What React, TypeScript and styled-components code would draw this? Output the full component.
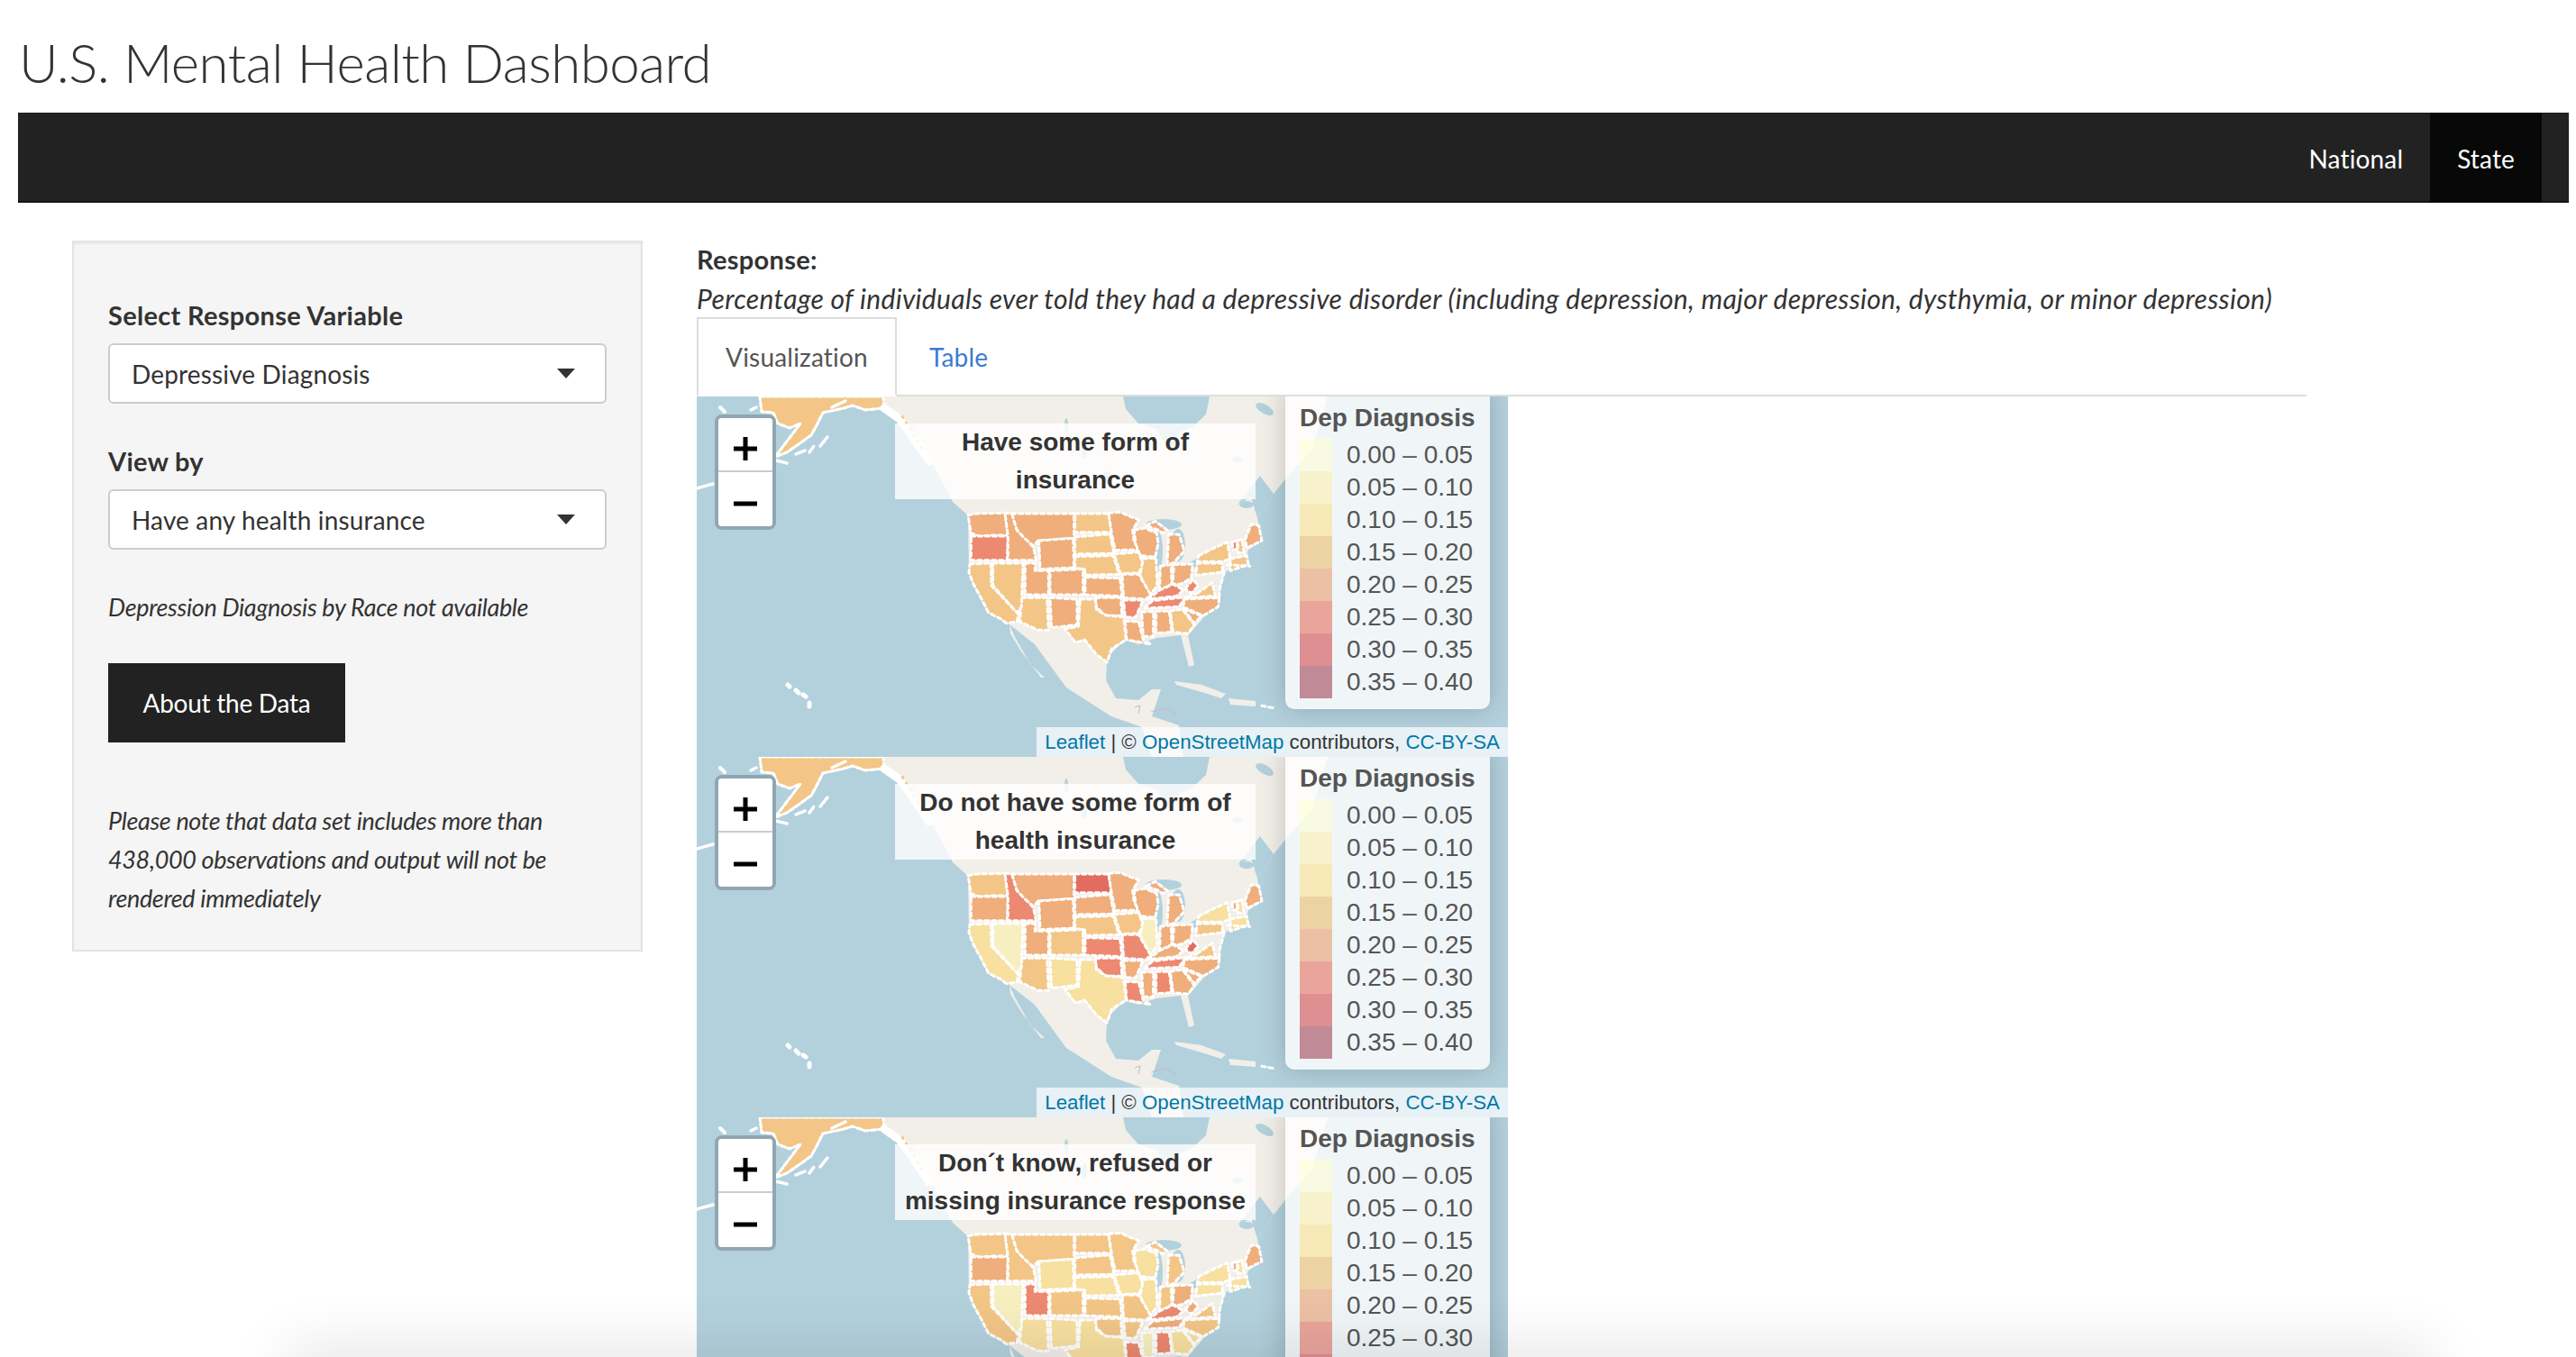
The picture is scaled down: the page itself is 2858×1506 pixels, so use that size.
import React from "react";
import styled, { createGlobalStyle } from "styled-components";

const Global = createGlobalStyle`
  html, body { margin: 0; padding: 0; background: #fff; overflow: hidden; }
  * { box-sizing: border-box; }
`;

const UI = `"Lato", "Open Sans", "Liberation Sans", sans-serif`;
const MAPFONT = `"Liberation Sans", Arial, sans-serif`;

const Page = styled.div`
  position: relative;
  width: 2858px;
  height: 1506px;
  overflow: hidden;
  font-family: ${UI};
  color: #333;
`;
const Title = styled.h1`
  margin: 0;
  height: 125px;
  padding: 34px 0 0 21px;
  font-size: 60px;
  line-height: 70px;
  font-weight: 300;
  letter-spacing: -0.55px;
  color: #333;
`;
const NavBar = styled.nav`
  margin: 0 8px 0 20px;
  height: 100px;
  background: #222;
  border-bottom: 2px solid #121212;
  display: flex;
  justify-content: flex-end;
  padding-right: 30px;
`;
const NavItem = styled.a<{ $active?: boolean }>`
  display: flex;
  align-items: center;
  padding: 2px 30px 0;
  height: 100px;
  font-size: 28px;
  letter-spacing: 0.15px;
  color: #fff;
  background: ${(p) => (p.$active ? "#080808" : "transparent")};
`;
const Main = styled.div`
  display: flex;
  align-items: flex-start;
  padding: 42px 0 0 80px;
`;
const Well = styled.aside`
  width: 633px;
  height: 789px;
  flex: none;
  padding: 60px 38px 0;
  background: #f5f5f5;
  border: 2px solid #e3e3e3;
  box-shadow: inset 0 2px 2px rgba(0, 0, 0, 0.05);
`;
const Label = styled.div<{ $gap?: number }>`
  margin-top: ${(p) => p.$gap ?? 0}px;
  font-size: 29px;
  line-height: 42px;
  font-weight: 700;
  letter-spacing: 0.3px;
`;
const Select = styled.div`
  position: relative;
  margin-top: 10px;
  height: 67px;
  padding-left: 24px;
  display: flex;
  align-items: center;
  background: #fff;
  border: 2px solid #ccc;
  border-radius: 6px;
  font-size: 28px;
  letter-spacing: 0.15px;
  &::after {
    content: "";
    position: absolute;
    right: 33px;
    top: 26px;
    border-style: solid;
    border-width: 11px 10.5px 0;
    border-color: #333 transparent transparent;
  }
`;
const Note = styled.p<{ $gap: number }>`
  margin: ${(p) => p.$gap}px 0 0;
  font-size: 27px;
  line-height: 43px;
  font-style: italic;
  letter-spacing: -0.35px;
  white-space: nowrap;
`;
const Button = styled.div`
  margin-top: 41px;
  width: 263px;
  height: 88px;
  background: #222;
  color: #fff;
  display: flex;
  align-items: center;
  justify-content: center;
  font-size: 28px;
  letter-spacing: -0.25px;
`;
const Content = styled.section`
  margin-left: 60px;
  width: 1786px;
`;
const ResponseLabel = styled.div`
  font-size: 29px;
  line-height: 42px;
  font-weight: 700;
  letter-spacing: 0.3px;
`;
const ResponseText = styled.div`
  margin-top: 1px;
  font-size: 30px;
  line-height: 42px;
  font-style: italic;
  letter-spacing: 0.33px;
  white-space: nowrap;
`;
const Tabs = styled.div`
  height: 88px;
  display: flex;
  border-bottom: 2px solid #ddd;
`;
const Tab = styled.div<{ $active?: boolean }>`
  height: 88px;
  padding: 0 30px 0 ${(p) => (p.$active ? 30 : 36)}px;
  display: flex;
  align-items: center;
  font-size: 28px;
  letter-spacing: 0.2px;
  color: ${(p) => (p.$active ? "#555" : "#3a7bd0")};
  background: ${(p) => (p.$active ? "#fff" : "transparent")};
  border: ${(p) => (p.$active ? "2px solid #ddd" : "none")};
  border-bottom: ${(p) => (p.$active ? "2px solid #fff" : "none")};
`;
const MapFrame = styled.div`
  position: relative;
  width: 900px;
  height: 400px;
  overflow: hidden;
  background: #b3d1dd;
  font-family: ${MAPFONT};
  & > svg {
    display: block;
  }
`;
const Zoom = styled.div`
  position: absolute;
  left: 20px;
  top: 20px;
  width: 68px;
  height: 128px;
  border: 4px solid #90a7b1;
  border-radius: 8px;
  overflow: hidden;
  background: #fff;
`;
const ZoomBtn = styled.div<{ $first?: boolean }>`
  height: 60px;
  padding-top: 10px;
  display: flex;
  align-items: center;
  justify-content: center;
  background: #fff;
  border-bottom: ${(p) => (p.$first ? "2px solid #ccc" : "none")};
  & svg {
    display: block;
  }
`;
const InfoBox = styled.div`
  position: absolute;
  left: 220px;
  top: 30px;
  width: 400px;
  height: 84px;
  background: rgba(255, 255, 255, 0.8);
  text-align: center;
  font-size: 28px;
  line-height: 42px;
  font-weight: 700;
  color: #333;
`;
const Legend = styled.div`
  position: absolute;
  left: 653px;
  top: -12px;
  width: 227px;
  height: 359px;
  padding: 13px 0 0 16px;
  background: rgba(255, 255, 255, 0.8);
  border-radius: 10px;
  box-shadow: 0 0 30px rgba(0, 0, 0, 0.2);
  color: #555;
`;
const LegendTitle = styled.div`
  height: 46px;
  font-size: 28px;
  line-height: 46px;
  font-weight: 700;
  white-space: nowrap;
`;
const LegendRow = styled.div`
  display: flex;
  align-items: center;
  height: 36px;
`;
const Swatch = styled.span<{ $c: string }>`
  width: 36px;
  height: 36px;
  flex: none;
  background: ${(p) => p.$c};
  opacity: 0.5;
`;
const LegendLabel = styled.span`
  margin-left: 16px;
  font-size: 28px;
  line-height: 36px;
  white-space: nowrap;
`;
const Attribution = styled.div`
  position: absolute;
  right: 0;
  bottom: 0;
  height: 33px;
  padding: 0 9px;
  display: flex;
  align-items: center;
  background: rgba(255, 255, 255, 0.7);
  font-size: 22.3px;
  color: #333;
  white-space: nowrap;
`;
const MapLink = styled.span`
  color: #0078a8;
`;
const PageShadow = styled.div`
  position: absolute;
  left: 330px;
  right: 170px;
  top: 1510px;
  height: 40px;
  box-shadow: 0 0 70px 10px rgba(0, 0, 0, 0.12);
`;

const BIN = ["#fbfbd8", "#f8efc0", "#f7e0a0", "#f3c687", "#efae7b", "#ec8970", "#e26c60"];
const LEGEND = [
  ["0.00 – 0.05", "#ffffcc"],
  ["0.05 – 0.10", "#ffeda0"],
  ["0.10 – 0.15", "#fed976"],
  ["0.15 – 0.20", "#e9b04f"],
  ["0.20 – 0.25", "#e8894f"],
  ["0.25 – 0.30", "#e2543f"],
  ["0.30 – 0.35", "#c9282c"],
  ["0.35 – 0.40", "#8f1f36"],
];

const STATES: Record<string, string> = {
  WA: "222,155 250,150 345,148 355,222 300,222 262,226 232,215",
  OR: "232,225 355,225 352,305 232,305",
  ID: "345,148 368,150 385,205 415,235 440,262 448,305 355,305 355,225",
  MT: "368,150 575,150 575,232 455,240 440,258 410,232 385,205",
  WY: "458,240 572,232 575,330 462,335",
  ND: "578,150 690,150 700,212 578,212",
  SD: "578,228 695,218 708,283 578,285",
  NE: "578,293 705,290 725,352 612,355 610,335 578,332",
  MN: "690,148 730,145 750,155 790,170 770,205 775,245 795,270 712,272 700,215",
  IA: "708,285 790,278 805,320 790,348 730,350",
  WI: "775,205 810,198 850,215 855,250 845,295 795,290 780,250",
  IL: "805,300 848,298 852,390 825,425 795,355",
  IN: "862,325 898,320 900,385 860,405",
  MI: "890,218 925,220 942,275 905,315 885,320",
  UP: "815,190 845,175 885,205 870,215 855,205",
  OH: "908,320 970,318 965,365 930,385 903,385",
  KY: "820,435 860,405 905,385 940,405 915,425",
  TN: "810,465 835,440 945,428 925,460",
  WV: "945,400 970,370 990,390 965,415",
  VA: "985,415 1035,380 1045,425 945,430",
  NC: "940,435 1058,430 1055,460 1005,490 940,462",
  SC: "940,468 1000,490 975,515",
  GA: "895,475 935,468 975,520 955,550 905,545",
  AL: "848,475 892,475 900,545 848,548",
  MS: "800,478 840,475 838,560 805,558",
  LA: "745,508 790,510 805,570 830,585 780,575 750,570",
  AR: "740,438 805,438 780,495 745,495",
  MO: "735,352 790,352 830,420 815,435 740,430",
  KS: "612,362 728,365 735,425 612,420",
  OK: "648,430 730,430 735,490 680,490 648,460",
  TX: "595,435 645,435 650,470 680,488 740,495 748,570 700,600 685,645 650,620 610,570 580,580 545,535 590,525",
  NM: "495,430 585,435 585,520 500,530",
  AZ: "400,430 485,430 490,538 455,538 395,510",
  CO: "495,340 605,335 605,420 495,420",
  UT: "412,315 445,315 445,340 490,340 490,420 412,420",
  NV: "305,315 405,315 400,460 385,480 305,390",
  CA: "228,318 298,315 300,390 390,485 385,510 350,515 330,500 290,480 265,430 240,385 225,345",
  PA: "985,315 1068,315 1070,345 980,355",
  NY: "990,290 1040,265 1085,245 1095,300 1070,310 985,310",
  ME: "1145,235 1165,185 1190,190 1200,240 1150,265",
  VT: "1100,245 1120,240 1115,270 1105,270",
  NH: "1120,240 1135,235 1140,280 1120,280",
  MA: "1095,300 1150,290 1155,320 1095,340",
};

type Bins = Record<string, number>;
const MAP1: Bins = { WA: 4, OR: 5, ID: 4, MT: 4, WY: 4, ND: 3, SD: 3, NE: 3, MN: 4, IA: 3, WI: 4, IL: 3, IN: 4, MI: 4, UP: 4, OH: 4, KY: 5, TN: 5, WV: 5, VA: 3, NC: 4, SC: 4, GA: 3, AL: 4, MS: 4, LA: 4, AR: 5, MO: 4, KS: 4, OK: 4, TX: 3, NM: 4, AZ: 3, CO: 4, UT: 4, NV: 3, CA: 3, PA: 3, NY: 3, ME: 4, VT: 5, NH: 3, MA: 3 };
const MAP2: Bins = { WA: 3, OR: 4, ID: 5, MT: 4, WY: 4, ND: 6, SD: 4, NE: 3, MN: 4, IA: 3, WI: 4, IL: 1, IN: 4, MI: 4, UP: 4, OH: 4, KY: 4, TN: 5, WV: 6, VA: 3, NC: 4, SC: 4, GA: 4, AL: 5, MS: 4, LA: 5, AR: 4, MO: 5, KS: 5, OK: 5, TX: 2, NM: 2, AZ: 3, CO: 3, UT: 4, NV: 1, CA: 2, PA: 3, NY: 2, ME: 4, VT: 4, NH: 2, MA: 2 };
const MAP3: Bins = { WA: 3, OR: 4, ID: 3, MT: 3, WY: 2, ND: 3, SD: 3, NE: 2, MN: 3, IA: 2, WI: 2, IL: 2, IN: 3, MI: 3, UP: 3, OH: 4, KY: 5, TN: 4, WV: 4, VA: 3, NC: 3, SC: 2, GA: 2, AL: 5, MS: 1, LA: 5, AR: 3, MO: 3, KS: 3, OK: 3, TX: 2, NM: 2, AZ: 2, CO: 3, UT: 5, NV: 1, CA: 3, PA: 2, NY: 2, ME: 4, VT: 4, NH: 2, MA: 2 };

const LAND = "M209 0 L700 0 L682 60 L656 88 L640 108 L622 135 L627 160 L612 170 L608 185 L585 195 L578 225 L560 248 L545 265 L552 298 L546 300 L537 265 L510 268 L490 275 L475 270 L460 285 L455 295 L454 315 L465 335 L490 337 L505 325 L515 325 L505 355 L535 365 L540 400 L505 400 L494 367 L460 355 L410 323 L375 275 L347 253 L324 240 L302 195 L301 132 L284 117 L270 90 L240 35 L209 13 Z";

const NorthAmerica: React.FC<{ bins: Bins; id: string }> = ({ bins, id }) => (
  <svg width={900} height={400} viewBox="0 0 900 400">
    <defs>
      <filter id={id} x="-5%" y="-5%" width="110%" height="110%">
        <feGaussianBlur stdDeviation="0.7" />
      </filter>
    </defs>
    <g filter={`url(#${id})`}>
      <path d={LAND} fill="#f2efe9" />
      <polygon points="347,253 353,267 370,297 386,312 382,312 360,283 348,263" fill="#f2efe9" />
      <polygon points="530,316 560,320 587,330 582,335 560,328 532,320" fill="#f2efe9" />
      <polygon points="590,335 620,338 620,344 592,342" fill="#f2efe9" />
      <path d="M473 0 L569 0 L565 20 L550 34 L535 40 L528 60 L518 50 L510 36 L490 30 L476 14 Z" fill="#b3d1dd" />
      <path d="M640 108 L625 88 L600 120 L590 125 L615 112 L622 135 Z" fill="#b3d1dd" />
      <g fill="#b3d1dd">
        <ellipse cx="518" cy="142" rx="20" ry="6" />
        <ellipse cx="512" cy="172" rx="5" ry="22" />
        <ellipse cx="534" cy="165" rx="8" ry="18" />
        <ellipse cx="556" cy="184" rx="14" ry="4" transform="rotate(-25 556 184)" />
        <ellipse cx="575" cy="172" rx="10" ry="3" transform="rotate(-15 575 172)" />
        <ellipse cx="430" cy="60" rx="3" ry="9" />
        <ellipse cx="410" cy="32" rx="2" ry="8" />
        <ellipse cx="455" cy="90" rx="5" ry="7" />
        <ellipse cx="600" cy="70" rx="6" ry="3" />
        <ellipse cx="610" cy="120" rx="8" ry="4" />
        <ellipse cx="630" cy="14" rx="11" ry="5" transform="rotate(30 630 14)" />
      </g>
      <path d="M486 345 L492 343 L490 352 M504 350 L520 346 L532 352" stroke="#c9b6c6" strokeWidth="1" fill="none" />
    </g>
    <g transform="translate(227 80) scale(0.3333)">
      {Object.entries(STATES).map(([sid, pts]) => (
        <polygon
          key={sid}
          points={pts}
          fill={BIN[bins[sid]]}
          stroke="#fff"
          strokeWidth="9"
          strokeDasharray="13 11"
          strokeLinecap="round"
          strokeLinejoin="round"
        />
      ))}
      <g fill="none" stroke="#fff" strokeWidth="9" strokeLinecap="round" strokeDasharray="13 11">
        <path d="M1075 345 L1060 400 L1058 430" />
        <path d="M1085 320 L1160 325" />
        <path d="M1200 790 L1245 798" />
      </g>
    </g>
    <polygon
      points="70,0 207,0 208,13 187,15 173,10 163,13 140,18 133,32 127,43 113,53 100,62 87,67 115,30 103,35 90,30 85,18 72,17"
      fill="#f3c687"
      stroke="#fff"
      strokeWidth="3.2"
      strokeDasharray="5 3"
      strokeLinecap="round"
      strokeLinejoin="round"
    />
    <g fill="none" stroke="#fff" strokeLinecap="round">
      <path d="M208 13 L225 25 L240 45 L258 72" strokeWidth="9" strokeDasharray="4 2" />
      <path d="M228 22 L250 58" strokeWidth="2.5" stroke="#f3c687" strokeDasharray="2 6" />
      <path d="M0 102 L18 97" strokeWidth="3.5" strokeDasharray="5 2" />
      <path d="M26 12 L31 17" strokeWidth="4" />
      <path d="M101 320 L103 322 M110 326 L113 329 M118 331 L121 333 M125 340 L125 344" strokeWidth="5" />
      <path d="M137 55 L145 45 M120 60 L110 64 M150 12 L165 5 M125 62 L130 55" strokeWidth="3.5" strokeDasharray="3 2" />
      <path d="M60 15 L66 12 M84 70 L100 74" strokeWidth="3.5" strokeDasharray="3 2" />
    </g>
  </svg>
);

const LeafletMap: React.FC<{ bins: Bins; lines: [string, string]; id: string }> = ({ bins, lines, id }) => (
  <MapFrame>
    <NorthAmerica bins={bins} id={id} />
    <Zoom>
      <ZoomBtn $first>
        <svg width="26" height="26" viewBox="0 0 26 26">
          <path d="M0 13H26M13 0V26" stroke="#000" strokeWidth="5" />
        </svg>
      </ZoomBtn>
      <ZoomBtn>
        <svg width="26" height="6" viewBox="0 0 26 6">
          <path d="M0 3H26" stroke="#000" strokeWidth="5" />
        </svg>
      </ZoomBtn>
    </Zoom>
    <InfoBox>
      {lines[0]}
      <br />
      {lines[1]}
    </InfoBox>
    <Legend>
      <LegendTitle>Dep Diagnosis</LegendTitle>
      {LEGEND.map(([t, c]) => (
        <LegendRow key={t}>
          <Swatch $c={c} />
          <LegendLabel>{t}</LegendLabel>
        </LegendRow>
      ))}
    </Legend>
    <Attribution>
      <MapLink>Leaflet</MapLink>&nbsp;|&nbsp;©&nbsp;<MapLink>OpenStreetMap</MapLink>&nbsp;contributors,&nbsp;<MapLink>CC-BY-SA</MapLink>
    </Attribution>
  </MapFrame>
);

export default function App() {
  return (
    <Page>
      <Global />
      <Title>U.S. Mental Health Dashboard</Title>
      <NavBar>
        <NavItem>National</NavItem>
        <NavItem $active>State</NavItem>
      </NavBar>
      <Main>
        <Well>
          <Label>Select Response Variable</Label>
          <Select>Depressive Diagnosis</Select>
          <Label $gap={43}>View by</Label>
          <Select>Have any health insurance</Select>
          <Note $gap={42}>Depression Diagnosis by Race not available</Note>
          <Button>About the Data</Button>
          <Note $gap={65}>
            Please note that data set includes more than
            <br />
            438,000 observations and output will not be
            <br />
            rendered immediately
          </Note>
        </Well>
        <Content>
          <ResponseLabel>Response:</ResponseLabel>
          <ResponseText>
            Percentage of individuals ever told they had a depressive disorder (including depression, major depression, dysthymia, or minor depression)
          </ResponseText>
          <Tabs>
            <Tab $active>Visualization</Tab>
            <Tab>Table</Tab>
          </Tabs>
          <LeafletMap id="m1" bins={MAP1} lines={["Have some form of", "insurance"]} />
          <LeafletMap id="m2" bins={MAP2} lines={["Do not have some form of", "health insurance"]} />
          <LeafletMap id="m3" bins={MAP3} lines={["Don´t know, refused or", "missing insurance response"]} />
        </Content>
      </Main>
      <PageShadow />
    </Page>
  );
}
